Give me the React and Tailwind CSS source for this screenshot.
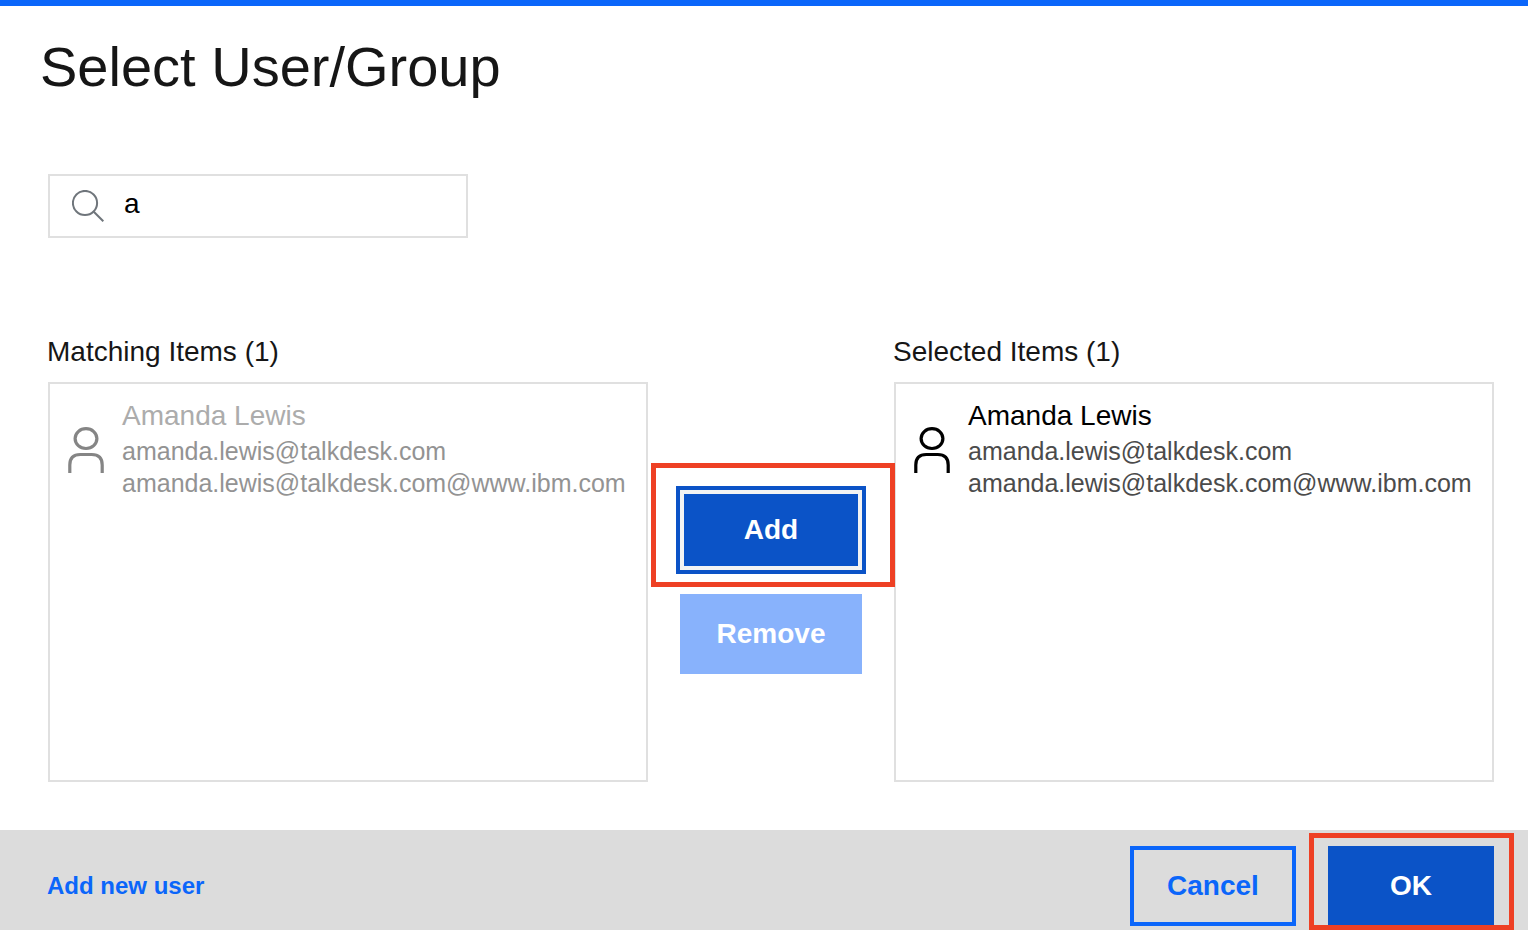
import { useState } from "react";

function PersonIcon({ className }) {
  return (
    <svg
      viewBox="0 0 36 46"
      fill="none"
      stroke="currentColor"
      strokeWidth="3.2"
      className={className}
      aria-hidden="true"
    >
      <ellipse cx="18" cy="11.6" rx="10.9" ry="9.9" />
      <path d="M1.800 46V38Q1.800 27.500 12.300 27.500H23.700Q34.200 27.500 34.200 38V46" />
    </svg>
  );
}

function SearchIcon() {
  return (
    <svg
      viewBox="0 0 32 32"
      fill="none"
      stroke="currentColor"
      strokeWidth="2"
      className="h-8 w-8 shrink-0 text-[#6f757b]"
      aria-hidden="true"
    >
      <circle cx="13" cy="13" r="12.1" />
      <path d="M21.800 21.800L31.300 31.300" />
    </svg>
  );
}

function ItemsPanel({ title, items, disabled }) {
  return (
    <section>
      <h2 className="-ml-px mb-3 text-[28px] leading-9 text-[#161616]">
        {title} ({items.length})
      </h2>
      <ul className="h-[400px] border-2 border-[#e0e0e0] px-[18px] py-[13px]">
        {items.map((item) => (
          <li key={item.id} className="flex items-start gap-[18px]">
            <PersonIcon
              className={
                disabled
                  ? "mt-[30px] h-[46px] w-9 shrink-0 text-[#858585]"
                  : "mt-[30px] h-[46px] w-9 shrink-0 text-black"
              }
            />
            <div>
              <p
                className={
                  disabled
                    ? "text-[28px] leading-[38px] text-[#acacac]"
                    : "text-[28px] leading-[38px] text-black"
                }
              >
                {item.name}
              </p>
              <div
                className={
                  disabled
                    ? "text-[25px] leading-8 text-[#939393]"
                    : "text-[25px] leading-8 text-[#4b4b4b]"
                }
              >
                <p>{item.email}</p>
                <p>{item.id}</p>
              </div>
            </div>
          </li>
        ))}
      </ul>
    </section>
  );
}

const users = [
  {
    name: "Amanda Lewis",
    email: "amanda.lewis@talkdesk.com",
    id: "amanda.lewis@talkdesk.com@www.ibm.com",
  },
];

export default function App() {
  const [query, setQuery] = useState("a");

  return (
    <div className="flex min-h-screen flex-col border-t-[6px] border-[#0b66fa] bg-white font-['Liberation_Sans',Arial,sans-serif]">
      <main className="flex-1 pr-[34px] pb-12 pl-12">
        <h1 className="-ml-2 pt-[29px] text-[56px] leading-[64px] text-[#161616]">
          Select User/Group
        </h1>

        {/* SEARCH */}
        <label className="mt-[75px] flex h-16 w-[420px] items-center gap-5 border-2 border-[#e0e0e0] px-[22px]">
          <SearchIcon />
          <input
            type="text"
            aria-label="Search users"
            value={query}
            onChange={(e) => setQuery(e.target.value)}
            className="h-full w-full min-w-0 pb-1 text-[28px] text-black focus:outline-none"
          />
        </label>

        {/* LISTS */}
        <div className="mt-24 grid grid-cols-[1fr_246px_1fr]">
          <ItemsPanel title="Matching Items" items={users} disabled />

          <div className="mt-12 flex flex-col items-center justify-center gap-6 text-[28px] font-bold text-white">
            <div className="relative">
              <button
                type="button"
                className="h-20 w-[182px] border-4 border-[#f3f3f3] bg-[#0b53c7] outline-4 outline-[#0b53c7]"
              >
                Add
              </button>
              <div className="pointer-events-none absolute -top-[27px] -right-[33px] -bottom-[17px] -left-[29px] border-5 border-[#ee4024]"></div>
            </div>
            <button type="button" disabled className="h-20 w-[182px] bg-[#88b2fc]">
              Remove
            </button>
          </div>

          <ItemsPanel title="Selected Items" items={users} />
        </div>
      </main>

      {/* FOOTER */}
      <footer className="flex items-start justify-between bg-[#dcdcdc] pt-4 pr-[34px] pb-1 pl-[47px] font-bold">
        <a href="#new-user" className="text-2xl leading-[80px] text-[#0b66fa]">
          Add new user
        </a>
        <div className="flex gap-8 text-[28px]">
          <button
            type="button"
            className="h-20 w-[166px] border-4 border-[#0b66fa] text-[#0b66fa]"
          >
            Cancel
          </button>
          <div className="relative">
            <button type="button" className="h-20 w-[166px] bg-[#0b53c7] text-white">
              OK
            </button>
            <div className="pointer-events-none absolute -top-[13px] -right-5 -bottom-1 -left-[19px] border-5 border-[#ee4024]"></div>
          </div>
        </div>
      </footer>
    </div>
  );
}
